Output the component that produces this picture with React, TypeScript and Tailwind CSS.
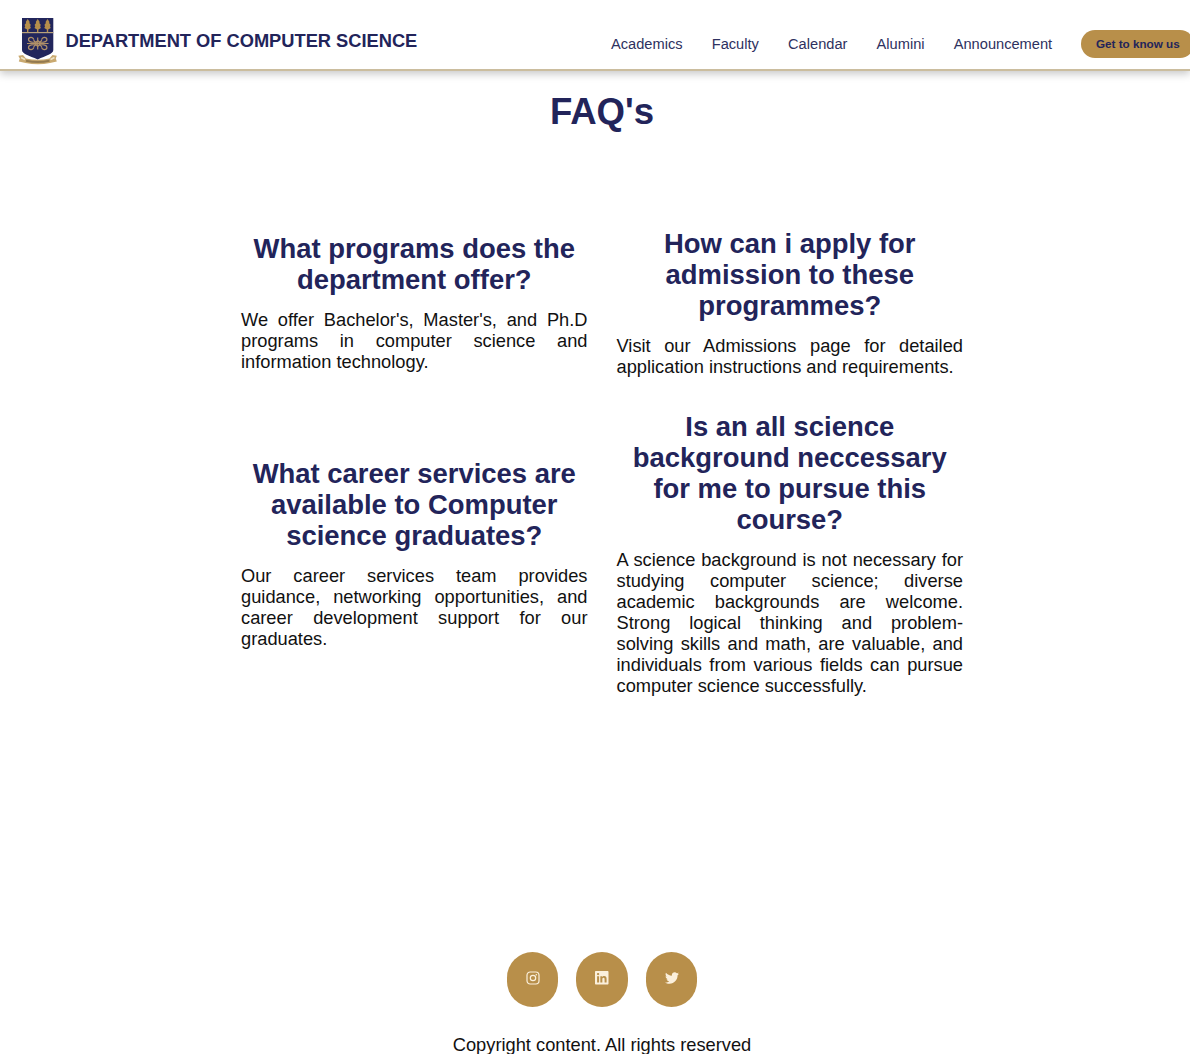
import React from "react";

const links = ["Academics", "Faculty", "Calendar", "Alumini", "Announcement"];

const faqs = [
  {
    q: ["What programs does the", "department offer?"],
    a: "We offer Bachelor's, Master's, and Ph.D programs in computer science and information technology.",
  },
  {
    q: ["How can i apply for", "admission to these", "programmes?"],
    a: "Visit our Admissions page for detailed application instructions and requirements.",
  },
  {
    q: ["What career services are", "available to Computer", "science graduates?"],
    a: "Our career services team provides guidance, networking opportunities, and career development support for our graduates.",
  },
  {
    q: ["Is an all science", "background neccessary", "for me to pursue this", "course?"],
    a: "A science background is not necessary for studying computer science; diverse academic backgrounds are welcome. Strong logical thinking and problem-solving skills and math, are valuable, and individuals from various fields can pursue computer science successfully.",
  },
];

function Crest() {
  return (
    <svg width="40" height="48" viewBox="0 0 40 48" className="block shrink-0">
      <path d="M4 1H35.300V33C35.300 37 28 38.500 19.700 42.500C11 38.500 4 37 4 33Z" fill="#22265c" />
      <rect x="4" y="15" width="31.300" height="1.200" fill="#b9a27c" />
      {[9.7, 19.7, 29.5].map((x) => (
        <g key={x} transform={`translate(${x} 0)`} fill="#b58e4b">
          <path d="M0 2L2 5L1.600 6L3.200 8L2.400 9L3.200 11L.7 12.600V15H-.7V12.600L-3.200 11L-2.400 9L-3.200 8L-1.600 6L-2 5Z" />
        </g>
      ))}
      <g fill="none" stroke="#b09068" strokeWidth="1.200">
        <path d="M9 26.500H30.500M19.700 20.500V32.500" />
        <path d="M19.700 23.500L22.700 26.500L19.700 29.500L16.700 26.500Z" />
        <path d="M18.500 25C16 25.500 10.500 25.500 10.500 22.500C10.500 19.800 15.500 19.800 15.500 22.300" />
        <path d="M20.900 25C23.400 25.500 28.900 25.500 28.900 22.500C28.900 19.800 23.900 19.800 23.900 22.300" />
        <path d="M18.500 28C16 27.500 10.500 27.500 10.500 30.500C10.500 33.200 15.500 33.200 15.500 30.700" />
        <path d="M20.900 28C23.400 27.500 28.900 27.500 28.900 30.500C28.900 33.200 23.900 33.200 23.900 30.700" />
        <path d="M15.500 22.300Q16 25 18.500 25.500M23.900 22.300Q23.400 25 20.900 25.500M15.500 30.700Q16 28 18.500 27.500M23.900 30.700Q23.400 28 20.900 27.500" />
      </g>
      <path d="M0.300 38.800L5 38L8 41.500Q20 44 31.500 41.500L34.500 38L38.800 38.800L37.800 41.500L38.800 44.500L32 46Q20 48.500 7.500 46L0.800 44.500L1.800 41.500Z" fill="#c9a970" />
      <path d="M8 43.800Q20 46.300 31.500 43.800" fill="none" stroke="#937a50" strokeWidth="1.900" />
      <path d="M3 40.500L7 42.500M32.500 42.500L36.500 40.500" stroke="#f0e4c8" strokeWidth="1.500" />
    </svg>
  );
}

function Instagram() {
  return (
    <svg width="14" height="14" viewBox="0 0 14 14" fill="none" stroke="#fbf0dc" strokeWidth="1.200">
      <rect x="1" y="1" width="12" height="12" rx="3.200" />
      <circle cx="7" cy="7" r="2.700" />
      <circle cx="10.300" cy="3.700" r=".8" fill="#fbf0dc" stroke="none" />
    </svg>
  );
}

function LinkedIn() {
  return (
    <svg width="13.500" height="13.500" viewBox="0 0 448 448" fill="#fbf0dc">
      <path d="M416 0H31.900C14.300 0 0 14.500 0 32.300v383.400C0 433.500 14.300 448 31.900 448H416c17.600 0 32-14.500 32-32.300V32.300C448 14.500 433.600 0 416 0zM135.400 384H69V170.200h66.500V384zM102.200 141c-21.300 0-38.500-17.300-38.500-38.500S80.900 64 102.200 64c21.200 0 38.500 17.300 38.500 38.500 0 21.300-17.200 38.500-38.500 38.500zM384.300 384h-66.400V280c0-24.800-.5-56.700-34.500-56.700-34.600 0-39.900 27-39.900 54.900V384h-66.400V170.200h63.700v29.200h.9c8.900-16.800 30.600-34.500 62.900-34.500 67.200 0 79.700 44.300 79.700 101.900V384z" />
    </svg>
  );
}

function Twitter() {
  return (
    <svg width="14" height="14" viewBox="0 0 512 512" fill="#fbf0dc">
      <path d="M459.370 151.716c.325 4.548.325 9.097.325 13.645 0 138.720-105.583 298.558-298.558 298.558-59.452 0-114.680-17.219-161.137-47.106 8.447.974 16.568 1.299 25.340 1.299 49.055 0 94.213-16.568 130.274-44.832-46.132-.975-84.792-31.188-98.112-72.772 6.498.974 12.995 1.624 19.818 1.624 9.421 0 18.843-1.300 27.614-3.573-48.081-9.747-84.143-51.980-84.143-102.985v-1.299c13.969 7.797 30.214 12.670 47.431 13.319-28.264-18.843-46.781-51.005-46.781-87.391 0-19.492 5.197-37.360 14.294-52.954 51.655 63.675 129.300 105.258 216.365 109.807-1.624-7.797-2.599-15.918-2.599-24.040 0-57.828 46.782-104.934 104.934-104.934 30.213 0 57.502 12.670 76.670 33.137 23.715-4.548 46.456-13.320 66.599-25.340-7.798 24.366-24.366 44.833-46.132 57.827 21.117-2.273 41.584-8.122 60.426-16.243-14.292 20.791-32.161 39.308-52.628 54.253z" />
    </svg>
  );
}

export default function App() {
  return (
    <div className="flex h-[1054px] w-full flex-col overflow-hidden bg-white font-['Liberation_Sans',Arial,sans-serif] text-[#111]">
      <header className="flex h-[71px] shrink-0 items-start border-b-2 border-[#cbbd9e] pl-[18px] shadow-[0_3px_8px_rgba(0,0,0,0.22)]">
        <div className="flex w-[593px] shrink-0 items-start pt-[17px]">
          <Crest />
          <span className="ml-[7.500px] mt-[13px] whitespace-nowrap text-[18.280px] leading-[21px] font-bold text-[#22245a]">
            DEPARTMENT OF COMPUTER SCIENCE
          </span>
        </div>
        <nav className="flex shrink-0 items-center gap-[29.200px] pt-[30px] text-[14.630px] leading-[28px] text-[#2e3160]">
          {links.map((l) => (
            <a key={l} className="-mt-px whitespace-nowrap">{l}</a>
          ))}
          <button className="h-[28px] w-[113px] shrink-0 rounded-full bg-[#b88f4a] text-[11.700px] font-bold whitespace-nowrap text-[#22245a]">
            Get to know us
          </button>
        </nav>
      </header>

      <main className="flex w-[1204px] shrink-0 flex-col items-center">
        <h1 className="mt-[20px] text-[36.570px] leading-[42px] font-bold text-[#22245a]">FAQ's</h1>
        <section className="mt-[95px] grid w-[722px] grid-cols-2 items-center gap-x-[29px] gap-y-[33.500px]">
          {faqs.map((f) => (
            <article key={f.a}>
              <h2 className="text-center text-[27.430px] leading-[31.100px] font-bold text-[#22245a]">
                {f.q.map((line) => (
                  <span key={line} className="block whitespace-nowrap">{line}</span>
                ))}
              </h2>
              <p className="mt-[14px] text-justify text-[18.280px] leading-[21.030px]">{f.a}</p>
            </article>
          ))}
        </section>
      </main>

      <footer className="mt-auto flex w-[1204px] shrink-0 flex-col items-center">
        <div className="flex gap-[18px]">
          {[Instagram, LinkedIn, Twitter].map((Icon, i) => (
            <a key={i} className="flex h-[55px] w-[51.500px] items-center justify-center rounded-full bg-[#b88f4a] pb-[3px]">
              <Icon />
            </a>
          ))}
        </div>
        <p className="mt-[27px] h-[20px] text-[18.280px] leading-[21px]">Copyright content. All rights reserved</p>
      </footer>
    </div>
  );
}
